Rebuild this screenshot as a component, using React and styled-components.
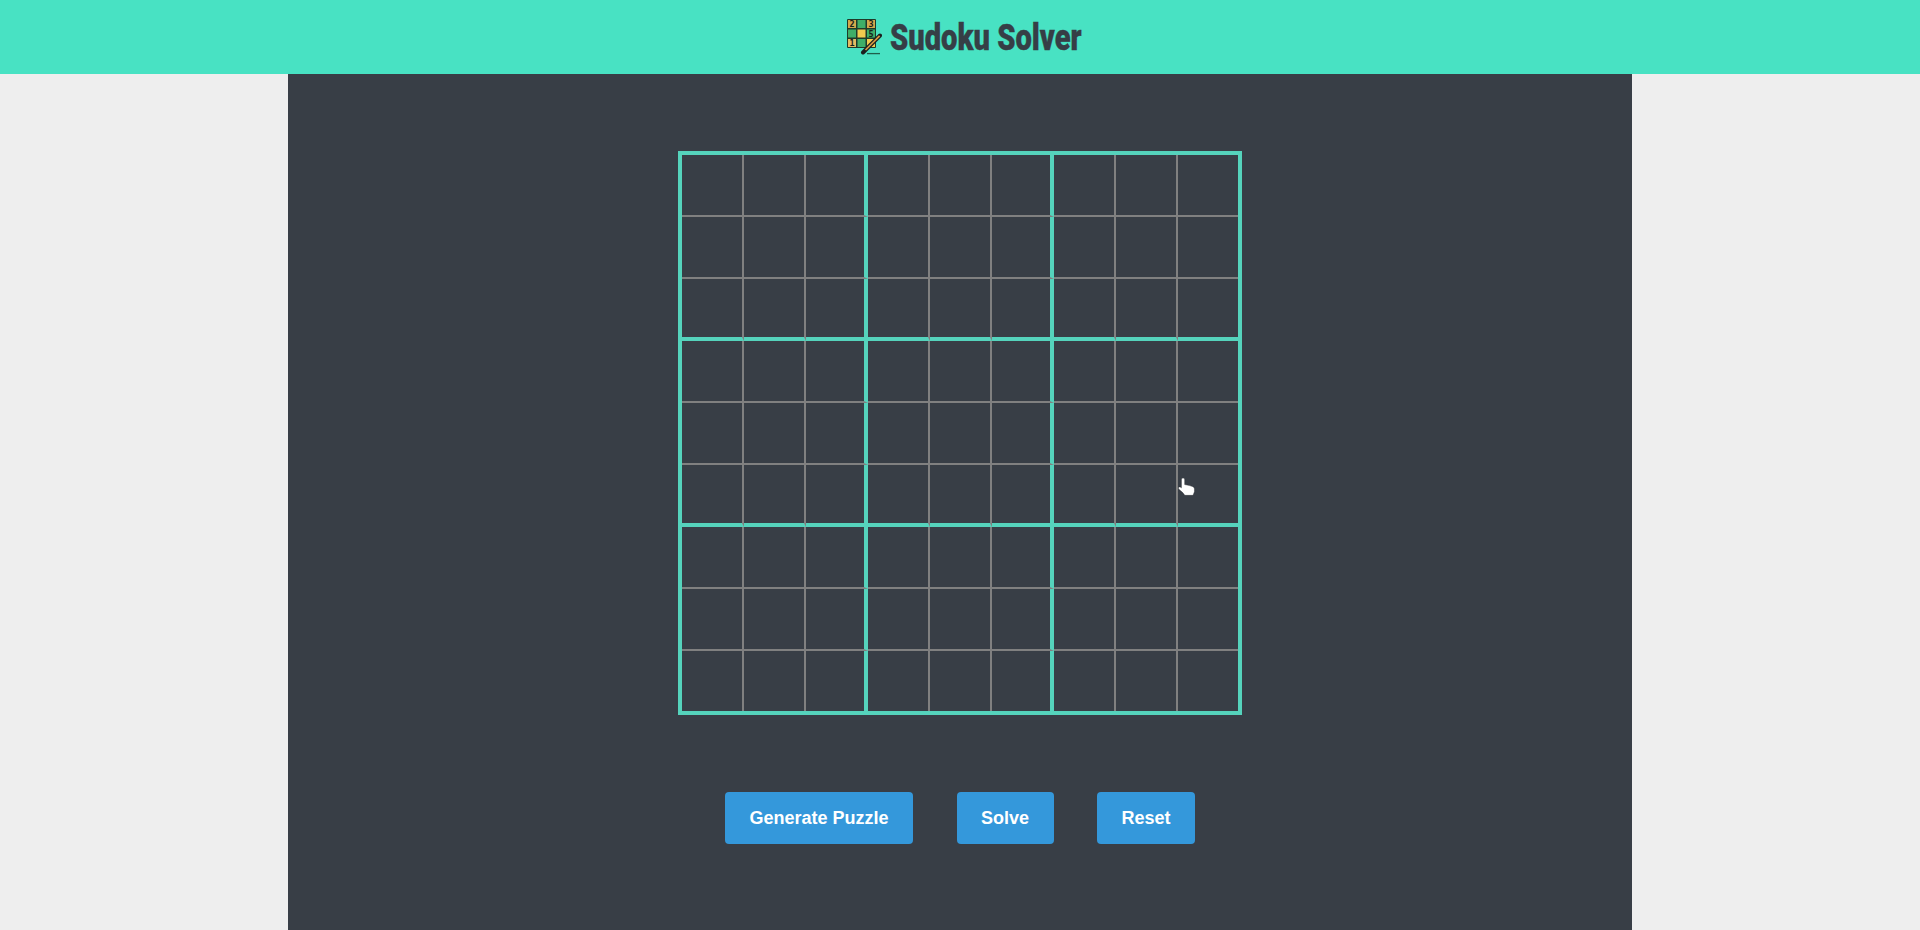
import React from "react";
import styled, { createGlobalStyle } from "styled-components";

const GlobalStyle = createGlobalStyle`
  html, body {
    margin: 0;
    padding: 0;
    background-color: #eeeeee;
    font-family: "Liberation Sans", Arial, sans-serif;
  }
`;

const Page = styled.div`
  height: 930px;
  overflow: hidden;
  display: flex;
  flex-direction: column;
`;

const Header = styled.header`
  height: 74px;
  flex-shrink: 0;
  padding-left: 7px;
  box-sizing: border-box;
  background-color: #48e2c3;
  display: flex;
  align-items: center;
  justify-content: center;
  gap: 8px;
`;

const Title = styled.h1`
  margin: 2px 0 0;
  width: 191px;
  white-space: nowrap;
  font-family: "Roboto", "Liberation Sans", sans-serif;
  font-size: 36px;
  font-weight: 900;
  line-height: 1;
  color: #363e46;
  -webkit-text-stroke: 0.4px #363e46;
  transform: scaleX(0.81);
  transform-origin: left center;
`;

const Panel = styled.main`
  flex: 1;
  width: 1344px;
  margin: 0 auto;
  padding-top: 77px;
  box-sizing: border-box;
  background-color: #383e46;
  display: flex;
  flex-direction: column;
  align-items: center;
`;

const Board = styled.div`
  position: relative;
  width: 564px;
  height: 564px;
  box-sizing: border-box;
  display: grid;
  grid-template-columns: repeat(8, 62px) 60px;
  grid-template-rows: repeat(8, 62px) 60px;
  border: 4px solid #55d3bc;
`;

const Cell = styled.div`
  box-sizing: border-box;
  border-right: ${({ $thickRight, $last }) =>
    $last ? "none" : $thickRight ? "4px solid #55d3bc" : "2px solid #808080"};
  border-bottom: ${({ $thickBottom, $lastRow }) =>
    $lastRow ? "none" : $thickBottom ? "4px solid #55d3bc" : "2px solid #808080"};
`;

const Pointer = styled.svg`
  position: absolute;
  left: 496px;
  top: 323px;
  width: 17px;
  height: 18px;
`;

const Actions = styled.div`
  display: flex;
  gap: 43.5px;
  margin-top: 77px;
`;

const Button = styled.button`
  height: 52px;
  padding: 0 24.5px;
  border: none;
  border-radius: 4px;
  background-color: #3498db;
  color: #ffffff;
  font-family: "Liberation Sans", Arial, sans-serif;
  font-size: 18px;
  font-weight: 700;
  cursor: pointer;
`;

const LogoDigit = styled.text`
  font-family: "DejaVu Sans Mono", monospace;
  font-size: 8.5px;
  font-weight: 700;
  fill: #16211a;
  text-anchor: middle;
`;

const tiles = [
  { x: 2, y: 1, fill: "#d2a94c" },
  { x: 11.5, y: 1, fill: "#3fae68" },
  { x: 21, y: 1, fill: "#d2a94c" },
  { x: 2, y: 10.5, fill: "#3fae68" },
  { x: 11.5, y: 10.5, fill: "#f1cb4f" },
  { x: 21, y: 10.5, fill: "#3fae68" },
  { x: 2, y: 20, fill: "#e3bb62" },
  { x: 11.5, y: 20, fill: "#3fae68" },
  { x: 21, y: 20, fill: "#f1cb4f" },
];

function Logo() {
  return (
    <svg width="36" height="36" viewBox="0 0 36 36">
      <rect x="1" y="0" width="29" height="29" rx="1" fill="#1f3a28" />
      {tiles.map((tile) => (
        <rect key={`${tile.x}-${tile.y}`} x={tile.x} y={tile.y} width="8" height="8" fill={tile.fill} />
      ))}
      <LogoDigit x="6" y="8">2</LogoDigit>
      <LogoDigit x="25" y="8">3</LogoDigit>
      <LogoDigit x="25" y="17.5">5</LogoDigit>
      <LogoDigit x="6" y="27">1</LogoDigit>
      <path d="M34 16.5 L17 33.5" stroke="#1c1f1f" strokeWidth="4" strokeLinecap="round" />
      <path d="M33.6 16.9 L19.5 31" stroke="#d69b45" strokeWidth="1.7" />
      <path d="M21 34.6 H34" stroke="#1f5f4b" strokeWidth="1.3" />
    </svg>
  );
}

export default function App() {
  const cells = Array.from({ length: 81 }, (_, index) => index);
  return (
    <Page>
      <GlobalStyle />
      <Header>
        <Logo />
        <Title>Sudoku Solver</Title>
      </Header>
      <Panel>
        <Board>
          {cells.map((index) => {
            const col = index % 9;
            const row = Math.floor(index / 9);
            return (
              <Cell
                key={index}
                $thickRight={col % 3 === 2}
                $last={col === 8}
                $thickBottom={row % 3 === 2}
                $lastRow={row === 8}
              />
            );
          })}
          <Pointer viewBox="0 0 16 17">
            <path
              d="M3.2 1.6 C3.2 .6 3.9 .1 4.7 .1 C5.6 .1 6.3 .6 6.3 1.6 V6.2 L8.5 6.6 L11 7.2 L13.6 8 C14.8 8.4 15.5 9.3 15.5 10.5 V13 L14.2 16.4 H6.4 L4.4 13.8 L.8 10.6 C.1 9.8 .2 8.9 1 8.5 C1.8 8.2 2.5 8.5 3.2 9.3 Z"
              fill="#ffffff"
              stroke="#23272b"
              strokeWidth="0.4"
            />
          </Pointer>
        </Board>
        <Actions>
          <Button>Generate Puzzle</Button>
          <Button>Solve</Button>
          <Button>Reset</Button>
        </Actions>
      </Panel>
    </Page>
  );
}
